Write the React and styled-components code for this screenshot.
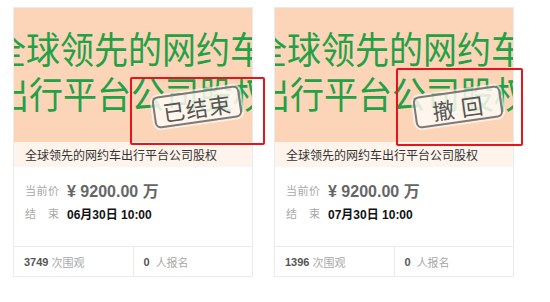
import React from 'react';
import styled, { createGlobalStyle } from 'styled-components';

const Global = createGlobalStyle`
  html, body { margin: 0; padding: 0; background: #fff; }
  body { font-family: "Liberation Sans", "Noto Sans CJK SC", sans-serif; }
`;

const Page = styled.div`
  display: flex;
  align-items: flex-start;
  gap: 21px;
  padding: 7px 0 0 13px;
  width: 550px;
  height: 302px;
  box-sizing: border-box;
`;

const Card = styled.div`
  position: relative;
  width: 240px;
  height: 270px;
  box-sizing: border-box;
  border: 1px solid #ebebeb;
  display: flex;
  flex-direction: column;
  background: #fff;
`;

const Picture = styled.div`
  position: relative;
  height: 134px;
  background: #fcd4b7;
  overflow: hidden;
  padding-top: 18px;
  box-sizing: border-box;
`;

const BigLine = styled.div`
  font-family: "Noto Sans CJK SC", sans-serif;
  font-size: 34px;
  line-height: 45px;
  color: #22a146;
  white-space: nowrap;
  margin-left: ${p => p.$indent}px;
  transform: scaleY(1.1);
`;

const Stamp = styled.div`
  position: absolute;
  left: 139px;
  top: 83px;
  width: 88px;
  height: 32px;
  box-sizing: border-box;
  border: 2px solid #7b7b7b;
  border-radius: 6px;
  background: rgba(255, 251, 246, 0.84);
  box-shadow: 0 0 0 2px rgba(255, 255, 255, 0.6);
  transform: rotate(-8deg);
  display: flex;
  align-items: center;
  justify-content: center;
  font-family: "Noto Sans CJK SC", sans-serif;
  font-size: 22px;
  color: #555;
  letter-spacing: 1px;
  white-space: pre;
`;

const Title = styled.div`
  height: 25px;
  line-height: 25px;
  padding-left: 11px;
  background: #fff4ec;
  font-family: "Noto Sans CJK SC", sans-serif;
  font-size: 12px;
  color: #333;
  white-space: nowrap;
`;

const Body = styled.div`
  height: 79px;
  box-sizing: border-box;
  padding: 12px 11px 0;
  display: flex;
  flex-direction: column;
  gap: 2px;
`;

const Row = styled.div`
  display: flex;
  align-items: center;
  gap: 8px;
  height: ${p => p.$h}px;
`;

const Label = styled.span`
  width: 34px;
  font-family: "Noto Sans CJK SC", sans-serif;
  font-size: 11px;
  color: #a8a8a8;
  text-align: justify;
  text-align-last: justify;
`;

const Price = styled.span`
  font-size: 16px;
  font-weight: bold;
  color: #666;
  white-space: pre;
`;

const DateText = styled.span`
  font-size: 12px;
  font-weight: bold;
  color: #111;
`;

const Footer = styled.div`
  height: 30px;
  box-sizing: border-box;
  border-top: 1px solid #ebebeb;
  display: flex;
`;

const Cell = styled.div`
  flex: 1;
  display: flex;
  align-items: center;
  gap: ${p => p.$gap}px;
  padding-left: ${p => p.$pad}px;
  font-size: 11px;
  border-left: ${p => (p.$divider ? '1px solid #ebebeb' : 'none')};
  white-space: pre;
`;

const Num = styled.span`
  font-weight: bold;
  color: #555;
`;

const Unit = styled.span`
  font-family: "Noto Sans CJK SC", sans-serif;
  color: #a8a8a8;
`;

const Highlight = styled.div`
  position: absolute;
  box-sizing: border-box;
  border: 2px solid #e8141b;
  border-radius: 2px;
  pointer-events: none;
`;

const cards = [
  {
    stamp: '已结束',
    date: '06月30日 10:00',
    views: '3749',
    box: { left: 116, top: 69, width: 135, height: 68 },
  },
  {
    stamp: '撤 回',
    date: '07月30日 10:00',
    views: '1396',
    box: { left: 121, top: 60, width: 127, height: 78 },
  },
];

export default function App() {
  return (
    <>
      <Global />
      <Page>
        {cards.map((c, i) => (
          <Card key={i}>
            <Picture>
              <BigLine $indent={-22}>全球领先的网约车</BigLine>
              <BigLine $indent={-19}>出行平台公司股权</BigLine>
              <Stamp>{c.stamp}</Stamp>
            </Picture>
            <Title>全球领先的网约车出行平台公司股权</Title>
            <Body>
              <Row $h={22}>
                <Label>当前价</Label>
                <Price>¥ 9200.00 万</Price>
              </Row>
              <Row $h={20}>
                <Label>结束</Label>
                <DateText>{c.date}</DateText>
              </Row>
            </Body>
            <Footer>
              <Cell $pad={10} $gap={3}>
                <Num>{c.views}</Num>
                <Unit>次围观</Unit>
              </Cell>
              <Cell $pad={10} $gap={6} $divider>
                <Num>0</Num>
                <Unit>人报名</Unit>
              </Cell>
            </Footer>
            <Highlight style={c.box} />
          </Card>
        ))}
      </Page>
    </>
  );
}
